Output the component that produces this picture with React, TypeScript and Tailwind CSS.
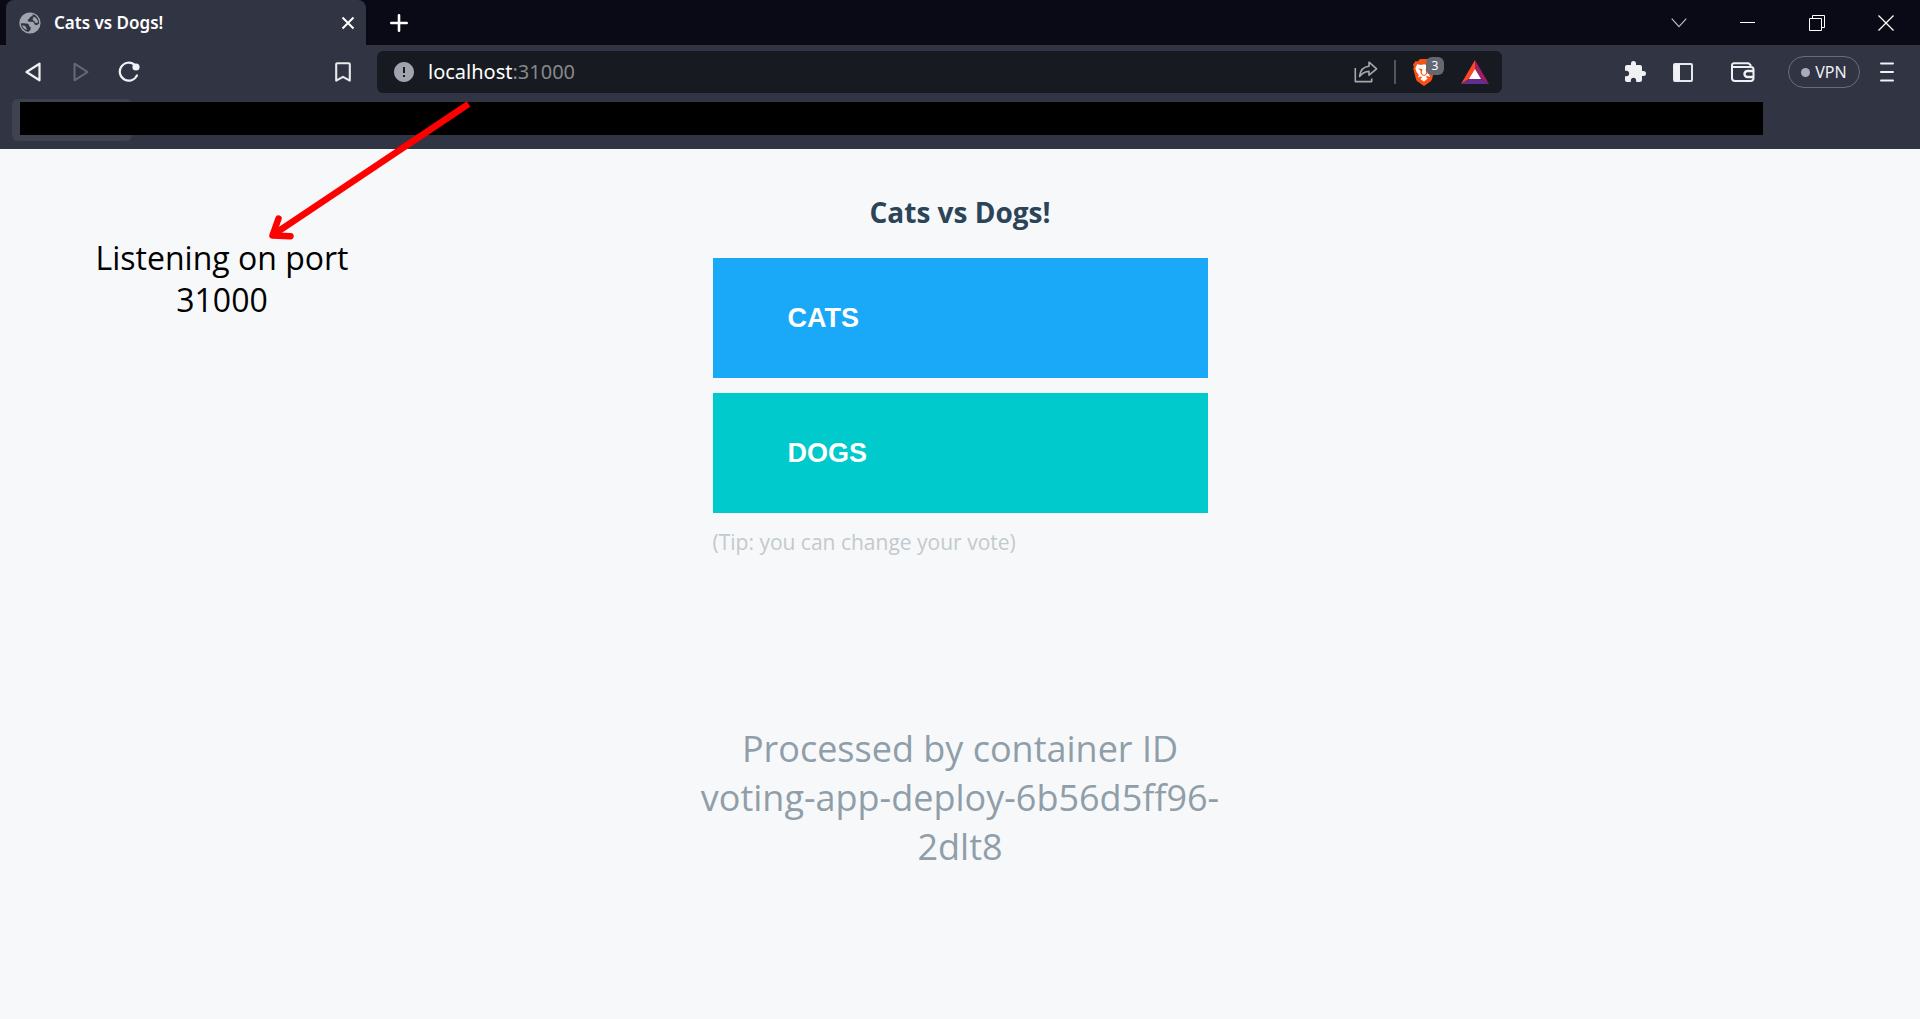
import type { ReactNode } from "react";
import { MdError, MdExtension } from "react-icons/md";

const UI_FONT = "font-['Noto_Sans','Open_Sans',sans-serif]";

function IconButton({
  label,
  className = "",
  children,
}: {
  label: string;
  className?: string;
  children: ReactNode;
}) {
  return (
    <button
      type="button"
      aria-label={label}
      className={`flex h-8 shrink-0 items-center justify-center ${className}`}
    >
      {children}
    </button>
  );
}

function TabStrip() {
  return (
    <div className="flex h-[45px] items-center bg-[#090a15] pl-1.5">
      <div className="flex h-full w-[360px] items-center rounded-t-lg bg-[#313443] pl-3 pr-0.5">
        <svg width="24" height="24" viewBox="0 0 24 24" fill="none">
          <circle cx="12" cy="12" r="10.6" fill="#a1a4ae" />
          <path
            d="M2.800 12.500c2.400-.4 5.200-.3 7 .3 1.600.6.700 2.200 1.900 2.700 1.300.5 1.200 1.700.9 2.900-.3 1.200-1.800 1.300-2.200 2.700A9.300 9.300 0 0 1 2.800 12.500z"
            fill="#313443"
          />
          <path
            d="M14.500 3c.8 1.300-.1 2.200-1.500 2.600-1.600.5-.9 2-2.300 2.500-1.500.5-1.300 2.200.2 2.600 1.800.5 3.200-.6 4.500.5 1.100 1 .9 2.600 2.400 2.900 1.400.2 2.400-.7 3.400-1.900A9.300 9.300 0 0 0 14.500 3z"
            fill="#313443"
          />
          <path d="M15.500 5.500c2.600 1 4.200 3.300 4.700 6l-2.200.6c-1.300-.6-1.500-2.700-3.200-3.200-.8-1.300.9-1.700.7-3.400z" fill="#a1a4ae" />
          <path d="M4 14.500c1.600-.2 3.200.2 3.800 1.400.5 1 1.200 1.600.9 3.200-2.300-.8-3.900-2.400-4.700-4.600z" fill="#a1a4ae" />
        </svg>
        <span className={`ml-3 flex-1 text-[17px] font-semibold text-white ${UI_FONT}`}>
          Cats vs Dogs!
        </span>
        <IconButton label="Close tab" className="w-8">
          <svg width="14" height="14" viewBox="0 0 14 14" stroke="#fff" strokeWidth="2">
            <path d="M1.500 1.500l11 11M12.500 1.500l-11 11" />
          </svg>
        </IconButton>
      </div>
      <IconButton label="New tab" className="ml-[17px] w-8">
        <svg width="18" height="18" viewBox="0 0 18 18" stroke="#fff" strokeWidth="2.600" strokeLinecap="round">
          <path d="M9 1.300v15.400M1.300 9h15.400" />
        </svg>
      </IconButton>
      <div className="ml-auto flex">
        <IconButton label="Search tabs" className="w-[69px]">
          <svg width="16" height="10" viewBox="0 0 16 10" fill="none" stroke="#b9bac2" strokeWidth="1.200">
            <path d="M.7.7l7.300 8 7.300-8" />
          </svg>
        </IconButton>
        <IconButton label="Minimize" className="w-[69px]">
          <svg width="15" height="2" viewBox="0 0 15 2">
            <path d="M0 .5h15" stroke="#fff" />
          </svg>
        </IconButton>
        <IconButton label="Restore" className="w-[69px]">
          <svg width="16" height="16" viewBox="0 0 16 16" fill="none" stroke="#fff">
            <path d="M.5 3.500h12v12H.5zM3.500 3.500v-3h12v12h-3" />
          </svg>
        </IconButton>
        <IconButton label="Close window" className="w-[69px]">
          <svg width="16" height="16" viewBox="0 0 16 16" stroke="#fff" strokeWidth="1.300">
            <path d="M.5.5l15 15M15.500.5l-15 15" />
          </svg>
        </IconButton>
      </div>
    </div>
  );
}

function BraveLion() {
  return (
    <svg width="22" height="27" viewBox="0 0 22 27">
      <path
        d="M7 0h8l2.300 2.400 2-.3L22 5.500l-.8 2.300.6 2-2.600 9.700c-.5 1.800-1.300 2.700-2.500 3.600L11 27l-5.700-3.900c-1.200-.9-2-1.800-2.500-3.600L.2 9.800l.6-2L0 5.500l2.700-3.400 2 .3z"
        fill="#fb4f14"
      />
      <path
        d="M4.200 5.200l4 .7L11 5.200l2.800.7 4-.7 1.900 3.600-1.300 3.700-2.300 2.900 1 2.600-3.100-.9-1 .9 1.700 1.600L11 22.500l-3.700-2.400L9 18.500l-1-.9-3.100.9 1-2.600-2.300-2.900-1.300-3.700z"
        fill="#fff"
      />
      <path
        d="M4.800 9.200l4.700 1.100-.8 3.200.7 1.700L11 16l1.600-.8.7-1.700-.8-3.200 4.700-1.100-2.900 2.500.2 2.600-1.800 1.900L11 17l-1.700-.8-1.800-1.900.2-2.600z"
        fill="#fb4f14"
      />
    </svg>
  );
}

function AddressBar() {
  return (
    <div className="flex h-[42px] flex-1 items-center rounded-md bg-[#171a20] pl-[15px] pr-[11px]">
      <MdError className="size-6 shrink-0 text-[#a1a4ae]" />
      <div className={`ml-3 flex-1 text-xl text-[#86888c] ${UI_FONT}`}>
        <span className="text-white">localhost</span>:31000
      </div>
      <IconButton label="Share" className="w-8">
        <svg width="24" height="22" viewBox="0 0 24 22" fill="none" stroke="#a6a8ae" strokeWidth="1.600" strokeLinejoin="round">
          <path d="M1.300 7v13.600h16.400v-3" />
          <path d="M15 1.200l7.600 6.600-7.600 6.400v-3.800c-4 .1-6.800 1.600-9.400 5 .6-5.800 3.700-9.800 9.400-10.200z" />
        </svg>
      </IconButton>
      <span className="mx-3 h-6 w-0.5 bg-[#53565e]" />
      <button
        type="button"
        aria-label="Brave Shields, 3 blocked"
        className="relative flex h-8 w-8 items-center justify-center"
      >
        <BraveLion />
        <span
          className={`absolute top-px left-[18px] flex h-[18px] w-[18px] items-center justify-center rounded-md bg-[#646873] text-xs text-white ${UI_FONT}`}
        >
          3
        </span>
      </button>
      <IconButton label="Brave Rewards" className="ml-[19px] w-8">
        <svg width="28" height="24" viewBox="0 0 28 24">
          <path d="M14 0L0 24l14-9z" fill="#ff4724" />
          <path d="M14 0l14 24-14-9z" fill="#9e1f63" />
          <path d="M0 24h28l-14-9z" fill="#662d91" />
          <path d="M14 9l6 10H8z" fill="#fff" />
        </svg>
      </IconButton>
    </div>
  );
}

function Toolbar() {
  return (
    <div className="flex items-center bg-[#313443] py-1.5 pl-[9px] pr-[17px]">
      <IconButton label="Back" className="w-12">
        <svg width="16" height="20" viewBox="0 0 16 20" fill="none" stroke="#f0f1f5" strokeWidth="2.200" strokeLinejoin="round">
          <path d="M14.500 1.700v16.600L1.500 10z" />
        </svg>
      </IconButton>
      <IconButton label="Forward" className="w-12">
        <svg width="16" height="20" viewBox="0 0 16 20" fill="none" stroke="#676a76" strokeWidth="2" strokeLinejoin="round">
          <path d="M1.500 1.700v16.600L14.500 10z" />
        </svg>
      </IconButton>
      <IconButton label="Reload" className="w-12">
        <svg width="22" height="22" viewBox="0 0 22 22" fill="none">
          <path d="M16.500 3.700A9 9 0 1 0 19 14.400" stroke="#f0f1f5" strokeWidth="2.200" strokeLinecap="round" />
          <circle cx="18" cy="6" r="3.600" fill="#f0f1f5" />
        </svg>
      </IconButton>
      <IconButton label="Bookmark this page" className="ml-[174px] mr-[18px] w-8">
        <svg width="16" height="20" viewBox="0 0 16 20" fill="none" stroke="#e9eaee" strokeWidth="2.100" strokeLinejoin="round">
          <path d="M1.200 2.200q0-1 1-1h11.600q1 0 1 1v16.400L8 14.800l-6.800 3.800z" />
        </svg>
      </IconButton>
      <AddressBar />
      <IconButton label="Extensions" className="ml-[117px] w-8">
        <MdExtension className="size-6 text-[#f0f1f5]" />
      </IconButton>
      <IconButton label="Sidebar" className="ml-4 w-8">
        <svg width="20" height="19" viewBox="0 0 20 19">
          <rect x="1" y="1" width="18" height="17" rx="1" fill="none" stroke="#e6e7ec" strokeWidth="2" />
          <path d="M1 1h6v17H1z" fill="#f0f1f5" />
        </svg>
      </IconButton>
      <IconButton label="Wallet" className="ml-7 w-8">
        <svg width="24" height="20" viewBox="0 0 24 20" fill="none" stroke="#f0f1f5" strokeWidth="2" strokeLinejoin="round">
          <path d="M19.500 5V3L17.500 1.200H3A2 2 0 0 0 1 3.200V16a3 3 0 0 0 3 3h15.500a3 3 0 0 0 3-3V7.500A2.500 2.500 0 0 0 20 5H1.500" />
          <path d="M22.500 9h-6a3 3 0 0 0 0 6h6" strokeWidth="2.400" />
        </svg>
      </IconButton>
      <button
        type="button"
        className={`ml-[29px] flex h-8 w-[72px] items-center justify-center gap-[5px] rounded-full border border-[#6a6d79] text-base text-[#eeeff5] ${UI_FONT}`}
      >
        <span className="size-[9px] rounded-full bg-[#a9acbb]" />
        VPN
      </button>
      <IconButton label="Menu" className="ml-[11px] w-8">
        <svg width="14" height="20" viewBox="0 0 14 20" stroke="#f0f1f5" strokeWidth="2" strokeLinecap="round">
          <path d="M1 1.500h12M1 10h12M1 18.500h12" />
        </svg>
      </IconButton>
    </div>
  );
}

function BookmarksBar() {
  return (
    <div className="h-[50px] bg-[#313443] pl-3 pr-[157px]">
      <div className="relative h-[42px]">
        <div className="h-full w-[120px] rounded-md bg-[#3f424f]" />
        <div className="absolute inset-x-0 top-[3px] ml-2 h-[33px] bg-black" />
      </div>
    </div>
  );
}

function PortNote() {
  return (
    <aside className="absolute left-[82px] top-[100px] w-[400px]">
      <svg width="400" height="137" viewBox="82 100 400 137" fill="none" stroke="#f00" strokeWidth="6.500" className="overflow-visible">
        <path d="M468.500 104L272 235.500" />
        <path d="M278.500 218.500L272.500 235.500L290.500 236.200" strokeLinecap="round" strokeLinejoin="round" />
      </svg>
      <p className="w-[280px] text-center font-['Open_Sans',sans-serif] text-[32px] leading-[42px] text-black">
        Listening on port
        <br />
        31000
      </p>
    </aside>
  );
}

function VotingPage() {
  return (
    <main className="flex flex-1 flex-col items-center font-['Open_Sans',sans-serif]">
      <h1 className="mt-[43px] text-[28px] leading-10 font-bold text-[#2b4457]">Cats vs Dogs!</h1>
      <form className="mt-[26px] flex w-[495px] flex-col gap-[15px]">
        <button
          type="button"
          className="h-[120px] bg-[#1aa9f8] pl-[75px] text-left font-['Liberation_Sans',Arial,sans-serif] text-[27px] font-bold text-white"
        >
          CATS
        </button>
        <button
          type="button"
          className="h-[120px] bg-[#00cacb] pl-[75px] text-left font-['Liberation_Sans',Arial,sans-serif] text-[27px] font-bold text-white"
        >
          DOGS
        </button>
      </form>
      <p className="mt-[13px] w-[495px] text-[21px] leading-8 text-[#c2cacd]">
        (Tip: you can change your vote)
      </p>
      <p className="mt-[166px] w-[540px] text-center text-4xl leading-[49px] text-[#8f9ea8]">
        Processed by container ID
        <br />
        voting-app-deploy-6b56d5ff96-
        <br />
        2dlt8
      </p>
    </main>
  );
}

export default function App() {
  return (
    <div className="relative flex min-h-screen flex-col bg-[#f7f8fa]">
      <header>
        <TabStrip />
        <Toolbar />
        <BookmarksBar />
      </header>
      <VotingPage />
      <PortNote />
    </div>
  );
}
